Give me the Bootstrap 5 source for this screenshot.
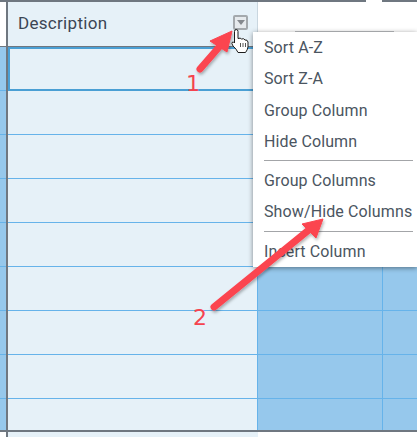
<!DOCTYPE html>
<html lang="en">
<head>
    <meta charset="UTF-8">
    <title>Description column menu</title>
    <meta name="viewport" content="width=device-width, initial-scale=1.0">
    <link href="https://cdn.jsdelivr.net/npm/bootstrap@5.3.0/dist/css/bootstrap.min.css" rel="stylesheet">
    <style>
        html, body { height: 437px; overflow: hidden; background: #fff; }
        body { font-family: Roboto, "Liberation Sans", sans-serif; }
        .sheet { position: relative; width: 417px; height: 437px; overflow: hidden; }

        .top-rule { height: 2px; background: #6f7780; }
        .top-rule i { display: block; width: 16px; height: 2px; margin-left: 366px; background: #fff; }

        .head-row { height: 44px; }
        .gutter { width: 6px; flex: none; }
        .bar { width: 2px; flex: none; background: #6f7780; }
        .desc-head { width: 250px; flex: none; background: #e6f1f8; border-right: 1px solid #c9d6df; padding-left: 10px; font-size: 17px; color: #3b4554; letter-spacing: .3px; }
        .filter-btn { width: 15px; height: 15px; margin: 0 9px 3px 0; border: 2px solid #a4a9ad; border-radius: 2px; background: #e6eaed; }
        .filter-btn::after { content: ""; border-left: 4px solid transparent; border-right: 4px solid transparent; border-top: 5px solid #85898e; }
        .head-rule { height: 1px; background: #6f7780; }

        .sheet-row { height: 44px; }
        .sheet-row.last { height: 31px; }
        .sheet-row.last > * { box-shadow: none; }
        .gutter-cell { width: 6px; flex: none; background: #96c8ec; box-shadow: inset 0 -1px 0 #66b3ea; }
        .desc-cell { width: 250px; flex: none; background: #e6f1f8; border-right: 1px solid #66b3ea; box-shadow: inset 0 -1px 0 #66b3ea; }
        .blue-a { width: 125px; flex: none; background: #96c8ec; border-right: 1px solid #66b3ea; box-shadow: inset 0 -1px 0 #66b3ea; }
        .blue-b { flex: 1; background: #96c8ec; box-shadow: inset 0 -1px 0 #66b3ea; }
        .active-cell { border: 2px solid #4a9fd4; box-shadow: none; }

        .foot-rule { height: 2px; background: #6f7780; }
        .foot-row { height: 5px; }
        .foot-cell { width: 250px; flex: none; background: #e6f1f8; }

        .col-menu { position: absolute; left: 253px; top: 32px; width: 164px; height: 235px; background: #fff; padding: 0 4px 0 11px; box-shadow: 0 1px 5px rgba(0, 0, 0, .45); font-size: 16px; letter-spacing: .12px; color: #4b5561; }
        .col-menu div { height: 31.3px; line-height: 31.3px; white-space: nowrap; }
        .col-menu hr { margin: 3px 0 4px; border: 0; height: 1px; background: #a3a5a8; opacity: 1; }
        .menu-rule { position: absolute; left: 295px; top: 31px; width: 99px; height: 1px; background: #a3a5a8; z-index: 1; }

        .overlay { position: absolute; left: 0; top: 0; }
        .callout { position: absolute; color: #f5434f; font-size: 22px; line-height: 1; font-family: "DejaVu Sans", sans-serif; }
        .c1 { left: 186px; top: 73px; }
        .c2 { left: 193px; top: 307px; }
    </style>
</head>
<body>

<div class="sheet">
    <div class="top-rule"><i></i></div>

    <!-- header -->
    <div class="d-flex head-row">
        <div class="gutter"></div>
        <div class="bar"></div>
        <div class="desc-head d-flex align-items-center justify-content-between">
            <span>Description</span>
            <span class="filter-btn d-flex align-items-center justify-content-center"></span>
        </div>
    </div>
    <div class="head-rule"></div>

    <!-- rows -->
    <div class="d-flex sheet-row">
        <div class="gutter-cell"></div><div class="bar"></div>
        <div class="desc-cell active-cell"></div><div class="blue-a"></div><div class="blue-b"></div>
    </div>
    <div class="d-flex sheet-row"><div class="gutter-cell"></div><div class="bar"></div><div class="desc-cell"></div><div class="blue-a"></div><div class="blue-b"></div></div>
    <div class="d-flex sheet-row"><div class="gutter-cell"></div><div class="bar"></div><div class="desc-cell"></div><div class="blue-a"></div><div class="blue-b"></div></div>
    <div class="d-flex sheet-row"><div class="gutter-cell"></div><div class="bar"></div><div class="desc-cell"></div><div class="blue-a"></div><div class="blue-b"></div></div>
    <div class="d-flex sheet-row"><div class="gutter-cell"></div><div class="bar"></div><div class="desc-cell"></div><div class="blue-a"></div><div class="blue-b"></div></div>
    <div class="d-flex sheet-row"><div class="gutter-cell"></div><div class="bar"></div><div class="desc-cell"></div><div class="blue-a"></div><div class="blue-b"></div></div>
    <div class="d-flex sheet-row"><div class="gutter-cell"></div><div class="bar"></div><div class="desc-cell"></div><div class="blue-a"></div><div class="blue-b"></div></div>
    <div class="d-flex sheet-row"><div class="gutter-cell"></div><div class="bar"></div><div class="desc-cell"></div><div class="blue-a"></div><div class="blue-b"></div></div>
    <div class="d-flex sheet-row last"><div class="gutter-cell"></div><div class="bar"></div><div class="desc-cell"></div><div class="blue-a"></div><div class="blue-b"></div></div>
    <div class="foot-rule"></div>
    <div class="d-flex foot-row"><div class="gutter"></div><div class="bar"></div><div class="foot-cell"></div></div>

    <!-- column menu -->
    <div class="menu-rule"></div>
    <div class="col-menu">
        <div>Sort A-Z</div>
        <div>Sort Z-A</div>
        <div>Group Column</div>
        <div>Hide Column</div>
        <hr>
        <div>Group Columns</div>
        <div>Show/Hide Columns</div>
        <hr>
        <div>Insert Column</div>
    </div>

    <!-- annotation arrows and cursor -->
    <svg class="overlay" width="417" height="437" viewBox="0 0 417 437">
        <defs>
            <filter id="soft" x="-20%" y="-20%" width="140%" height="140%">
                <feDropShadow dx="1" dy="2" stdDeviation="1.5" flood-color="#000" flood-opacity=".3"/>
            </filter>
        </defs>
        <g filter="url(#soft)" fill="#fb4450" stroke="#fb4450">
            <line x1="200" y1="69" x2="220" y2="46" stroke-width="7" stroke-linecap="round"/>
            <polygon points="232,31 210,41 227,52" stroke-width="1"/>
            <line x1="214" y1="307" x2="310" y2="229" stroke-width="7" stroke-linecap="round"/>
            <polygon points="323,219 302,224 316,238" stroke-width="1"/>
        </g>
        <path d="M234.5 31.5 Q234.5 29.5 236.2 29.5 Q238 29.5 238 31.5 L238 38.5 Q240.5 37.5 241.5 39 Q244 38 245 40 Q247.5 39.5 248 42 L248 47 Q247.5 50 245.5 52.5 L238 52.5 Q236.5 49 233 46 Q231 43 232.5 42 Q233.5 41.5 234.5 43 Z" fill="#fff" stroke="#1c1c1c" stroke-width="1"/>
        <path d="M240.5 43 V47 M243 43 V47 M245.5 43 V47" stroke="#555" stroke-width="1"/>
    </svg>
    <span class="callout c1">1</span>
    <span class="callout c2">2</span>
</div>

<script src="https://cdn.jsdelivr.net/npm/bootstrap@5.3.0/dist/js/bootstrap.bundle.min.js"></script>
</body>
</html>
